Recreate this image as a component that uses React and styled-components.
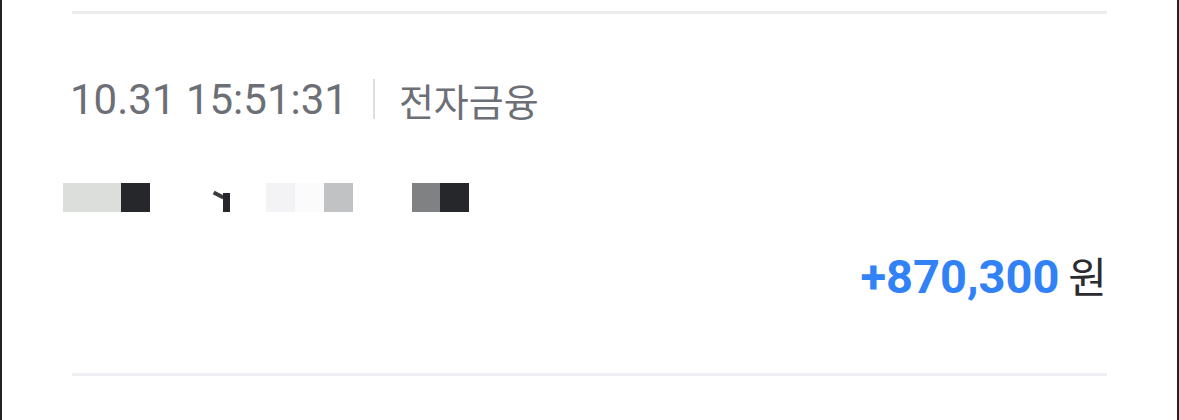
import React from 'react';
import styled, { createGlobalStyle } from 'styled-components';

const GlobalStyle = createGlobalStyle`
  html, body {
    margin: 0;
    padding: 0;
    background: #ffffff;
  }
`;

const Frame = styled.div`
  width: 1179px;
  height: 420px;
  box-sizing: border-box;
  border-left: 2px solid #222222;
  border-right: 2px solid #222222;
  background: #ffffff;
  padding: 11px 70px 0 70px;
  overflow: hidden;
`;

const Divider = styled.div`
  height: 3px;
  background: ${(props) => props.color || '#ececec'};
`;

const Item = styled.div`
  display: flex;
  flex-direction: column;
  height: 359px;
`;

const MetaRow = styled.div`
  display: flex;
  align-items: center;
  margin-top: 60px;
  height: 50px;
  color: #6c6f76;
`;

const Time = styled.span`
  font-family: Roboto, 'Noto Sans CJK KR', sans-serif;
  font-size: 42px;
  margin-left: -2px;
`;

const Bar = styled.span`
  display: inline-block;
  width: 2px;
  height: 40px;
  background: #dedfe1;
  margin: 0 24px 0 25px;
`;

const Category = styled.span`
  font-family: 'Noto Sans CJK KR', sans-serif;
  font-size: 38px;
`;

const Masked = styled.div`
  display: flex;
  margin-top: 59px;
  margin-left: -9px;
  height: 29px;
`;

const Cell = styled.span`
  display: block;
  width: ${(props) => props.w || 29}px;
  height: 29px;
  background: ${(props) => props.c || 'transparent'};
`;

const Tick = styled.span`
  display: block;
  width: 29px;
  height: 29px;
  position: relative;

  &::before {
    content: '';
    position: absolute;
    left: 5px;
    top: 10px;
    width: 11px;
    height: 4px;
    background: #3a3b3f;
    transform: rotate(28deg);
  }

  &::after {
    content: '';
    position: absolute;
    left: 15px;
    top: 10px;
    width: 7px;
    height: 19px;
    background: #26272b;
  }
`;

const AmountRow = styled.div`
  display: flex;
  justify-content: flex-end;
  align-items: baseline;
  margin-top: 32px;
  gap: 9px;
`;

const Amount = styled.span`
  font-family: Roboto, sans-serif;
  font-weight: 700;
  font-size: 47px;
  color: #3182f6;
`;

const Unit = styled.span`
  font-family: 'Noto Sans CJK KR', sans-serif;
  font-size: 42px;
  color: #2b2c30;
`;

const cells = [
  { c: '#dcdedc', w: 58 },
  { c: '#26272b' },
  { w: 58 },
  { tick: true },
  { w: 29 },
  { c: '#f3f3f5' },
  { c: '#fbfbfc' },
  { c: '#c0c2c3' },
  { w: 59 },
  { c: '#808183', w: 28 },
  { c: '#26272b' },
];

function App() {
  return (
    <>
      <GlobalStyle />
      <Frame>
        <Divider />
        <Item>
          <MetaRow>
            <Time>10.31 15:51:31</Time>
            <Bar />
            <Category>전자금융</Category>
          </MetaRow>
          <Masked>
            {cells.map((cell, i) =>
              cell.tick ? <Tick key={i} /> : <Cell key={i} c={cell.c} w={cell.w} />
            )}
          </Masked>
          <AmountRow>
            <Amount>+870,300</Amount>
            <Unit>원</Unit>
          </AmountRow>
        </Item>
        <Divider color="#eeeff2" />
      </Frame>
    </>
  );
}

export default App;
